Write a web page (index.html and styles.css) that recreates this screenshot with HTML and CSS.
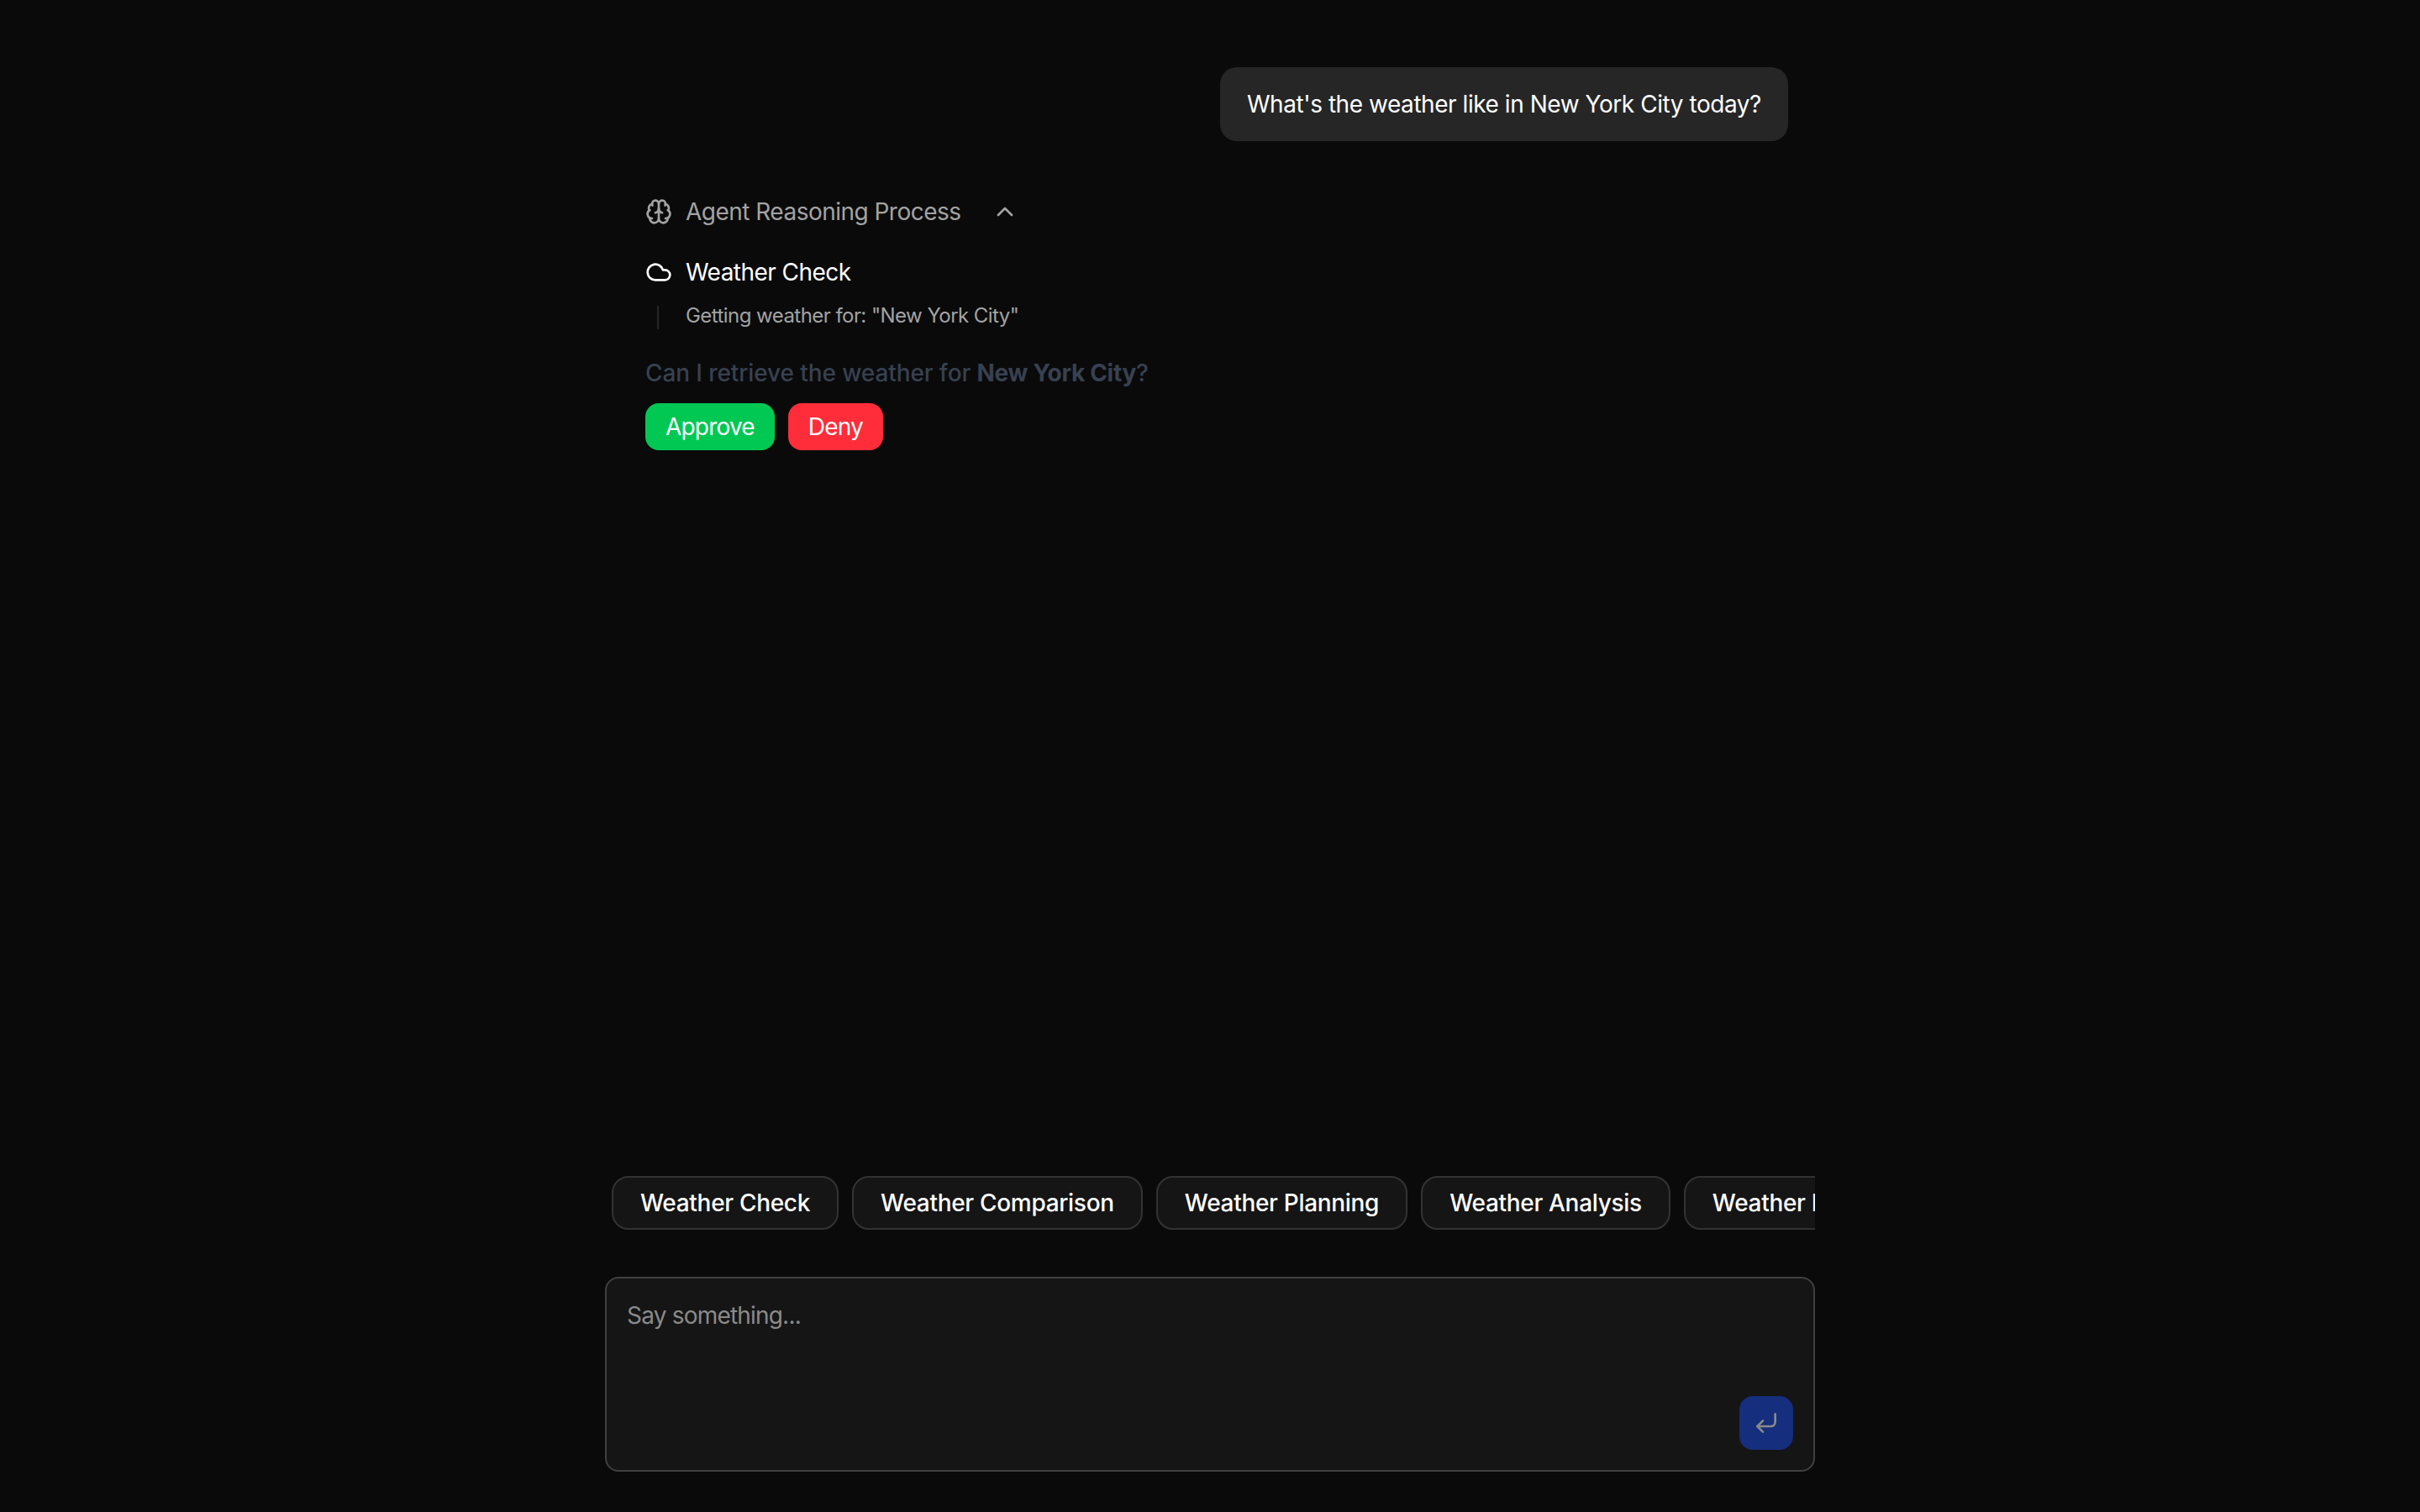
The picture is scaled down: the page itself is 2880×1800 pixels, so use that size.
FILE: index.html
```html
<!DOCTYPE html>
<html lang="en">
<head>
<meta charset="utf-8">
<title>Weather Agent</title>
<link rel="stylesheet" href="styles.css">
</head>
<body>
<main class="chat">
  <section class="thread">
    <div class="user-row"><div class="bubble">What's the weather like in New York City today?</div></div>
    <div class="agent">
      <div class="reason-head">
        <svg class="icon" viewBox="0 0 24 24"><path d="M12 18V5"/><path d="M15 13a4.17 4.17 0 0 1-3-4 4.17 4.17 0 0 1-3 4"/><path d="M17.598 6.5A3 3 0 1 0 12 5a3 3 0 1 0-5.598 1.5"/><path d="M17.997 5.125a4 4 0 0 1 2.526 5.77"/><path d="M18 18a4 4 0 0 0 2-7.464"/><path d="M19.967 17.483A4 4 0 1 1 12 18a4 4 0 1 1-7.967-.517"/><path d="M6 18a4 4 0 0 1-2-7.464"/><path d="M6.003 5.125a4 4 0 0 0-2.526 5.77"/></svg>
        <span>Agent Reasoning Process</span>
        <svg class="icon chevron" viewBox="0 0 24 24"><path d="m18 15-6-6-6 6"/></svg>
      </div>
      <div class="step-head">
        <svg class="icon" viewBox="0 0 24 24"><path d="M17.5 19H9a7 7 0 1 1 6.71-9h1.79a4.5 4.5 0 1 1 0 9Z"/></svg>
        <span>Weather Check</span>
      </div>
      <div class="step-body"><span class="rule"></span><span>Getting weather for: "New York City"</span></div>
      <p class="question">Can I retrieve the weather for <strong>New York City</strong>?</p>
      <div class="actions">
        <button class="btn approve">Approve</button>
        <button class="btn deny">Deny</button>
      </div>
    </div>
  </section>
  <div class="chips">
    <button class="chip">Weather Check</button>
    <button class="chip">Weather Comparison</button>
    <button class="chip">Weather Planning</button>
    <button class="chip">Weather Analysis</button>
    <button class="chip">Weather Impact</button>
  </div>
  <div class="composer">
    <div class="placeholder">Say something...</div>
    <div class="composer-foot">
      <button class="send"><svg class="icon" viewBox="0 0 24 24"><path d="M20 4v7a4 4 0 0 1-4 4H4"/><path d="m9 10-5 5 5 5"/></svg></button>
    </div>
  </div>
</main>
</body>
</html>
```
FILE: styles.css
```css
* { box-sizing: border-box; }
html, body { height: 100%; }
body {
  margin: 0;
  background: #0a0a0a;
  color: #fff;
  font-family: Inter, "Liberation Sans", sans-serif;
  font-size: 28px;
  line-height: 40px;
}
.chat {
  width: 1440px;
  height: 1800px;
  margin: 0 auto;
  display: flex;
  flex-direction: column;
  padding-bottom: 48px;
}
.thread { flex: 1; padding: 80px 32px 0 48px; }
.user-row { display: flex; justify-content: flex-end; }
.bubble {
  background: #262626;
  border-radius: 20px;
  padding: 24px 32px;
  letter-spacing: -0.45px;
}
.agent { margin-top: 64px; }
.icon {
  width: 32px;
  height: 32px;
  flex: none;
  fill: none;
  stroke: currentColor;
  stroke-width: 2;
  stroke-linecap: round;
  stroke-linejoin: round;
}
.reason-head {
  display: flex;
  align-items: center;
  gap: 16px;
  color: #a3a3a3;
  letter-spacing: -0.52px;
}
.reason-head .chevron { margin-left: 21px; }
.step-head {
  display: flex;
  align-items: center;
  gap: 16px;
  margin-top: 32px;
  letter-spacing: -0.55px;
}
.step-body {
  display: flex;
  align-items: center;
  gap: 32px;
  margin-top: 16px;
  padding-left: 14px;
  font-size: 24px;
  line-height: 32px;
  color: #a3a3a3;
  letter-spacing: -0.55px;
}
.rule { width: 2px; height: 28px; margin-top: 4px; background: #262626; }
.question { margin: 32px 0 0; color: #374151; letter-spacing: -0.1px; font-weight: 500; }
.question strong { font-weight: 700; letter-spacing: -0.3px; }
.actions { display: flex; gap: 16px; margin-top: 16px; }
.btn {
  height: 56px;
  padding: 0 24px;
  border: 0;
  border-radius: 16px;
  color: #fff;
  font: inherit;
  letter-spacing: -0.8px;
}
.approve { background: #00c853; }
.deny { background: #ff2d3a; }
.chips {
  display: flex;
  gap: 16px;
  padding-left: 8px;
  overflow: hidden;
  flex: none;
}
.chip {
  flex: none;
  height: 64px;
  padding: 0 32px;
  background: #151515;
  border: 2px solid #333;
  border-radius: 20px;
  color: #fff;
  font: 500 28px/40px Inter, "Liberation Sans", sans-serif;
  letter-spacing: -0.31px;
}
.composer {
  flex: none;
  height: 232px;
  margin-top: 56px;
  padding: 24px;
  display: flex;
  flex-direction: column;
  justify-content: space-between;
  background: #151515;
  border: 2px solid #404040;
  border-radius: 16px;
}
.placeholder { color: #8a8a8a; letter-spacing: -0.8px; }
.composer-foot { display: flex; justify-content: flex-end; }
.send {
  width: 64px;
  height: 64px;
  padding: 0;
  display: flex;
  align-items: center;
  justify-content: center;
  border: 0;
  border-radius: 16px;
  background: #152e7d;
  color: #8a8a8a;
}
```
